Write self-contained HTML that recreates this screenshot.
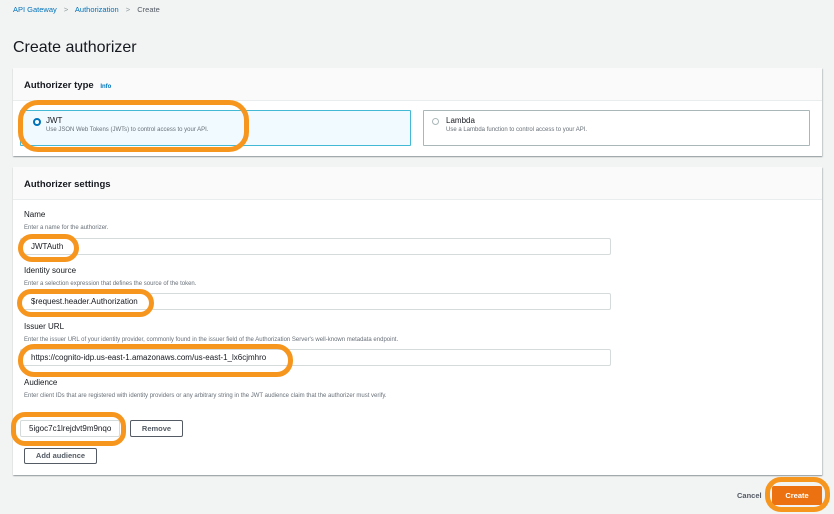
<!DOCTYPE html>
<html><head><meta charset="utf-8">
<style>
*{box-sizing:border-box;margin:0;padding:0}
body{width:834px;height:514px;background:#f2f3f3;font-family:"Liberation Sans",sans-serif;color:#16191f;position:relative;overflow:hidden}
.a{position:absolute;white-space:nowrap}
.panel{position:absolute;left:13px;width:809px;background:#fff;box-shadow:0 1px 1px rgba(0,28,36,.3),1px 1px 1px rgba(0,28,36,.15)}
.ph{position:absolute;left:0;top:0;width:100%;background:#fafafa;border-bottom:1px solid #eaeded}
.lbl{font-size:8px;color:#16191f}
.desc{font-size:6px;color:#687078}
.inp{position:absolute;background:#fff;border:1px solid #d5dbdb;border-radius:2px;font-size:8px;padding-left:10px;line-height:15px}
.btn{position:absolute;background:#fff;border:1px solid #545b64;border-radius:2px;font-size:7.5px;font-weight:bold;color:#545b64;text-align:center}
.ov{position:absolute;border:5px solid #f7961e;border-radius:16px}
</style></head><body>
<div class="a" style="left:13px;top:5px;font-size:7.5px;color:#0073bb">API Gateway <span style="color:#879596;margin:0 5px">&gt;</span> Authorization <span style="color:#879596;margin:0 5px">&gt;</span> <span style="color:#545b64">Create</span></div>
<div class="a" style="left:13px;top:39px;font-size:16px;color:#16191f">Create authorizer</div>

<div class="panel" style="top:68px;height:88px">
  <div class="ph" style="height:33px"></div>
  <div class="a" style="left:11px;top:12px;font-size:9.5px;font-weight:bold">Authorizer type <span style="font-size:6px;color:#0073bb;margin-left:4px">Info</span></div>
  <div style="position:absolute;left:7px;top:42px;width:391px;height:36px;background:#f1faff;border:1px solid #44b9d6;border-radius:1px"></div>
  <div style="position:absolute;left:410px;top:42px;width:387px;height:36px;background:#fff;border:1px solid #aab7b8;border-radius:1px"></div>
  <div style="position:absolute;left:20px;top:50px;width:8px;height:8px;border-radius:50%;border:2.5px solid #0073bb;background:#fff"></div>
  <div class="a" style="left:33px;top:48px;font-size:8px">JWT</div>
  <div class="a desc" style="left:33px;top:59px">Use JSON Web Tokens (JWTs) to control access to your API.</div>
  <div style="position:absolute;left:419px;top:50px;width:7px;height:7px;border-radius:50%;border:1px solid #aab7b8;background:#fff"></div>
  <div class="a" style="left:433px;top:48px;font-size:8px">Lambda</div>
  <div class="a desc" style="left:433px;top:59px">Use a Lambda function to control access to your API.</div>
</div>

<div class="panel" style="top:167px;height:308px">
  <div class="ph" style="height:33px"></div>
  <div class="a" style="left:11px;top:12px;font-size:9.5px;font-weight:bold">Authorizer settings</div>
</div>
<div class="a lbl" style="left:24px;top:210px">Name</div>
<div class="a desc" style="left:24px;top:225px">Enter a name for the authorizer.</div>
<div class="inp" style="left:20px;top:238px;width:591px;height:17px">JWTAuth</div>
<div class="a lbl" style="left:24px;top:266px">Identity source</div>
<div class="a desc" style="left:24px;top:281px">Enter a selection expression that defines the source of the token.</div>
<div class="inp" style="left:20px;top:293px;width:591px;height:17px">$request.header.Authorization</div>
<div class="a lbl" style="left:24px;top:322px">Issuer URL</div>
<div class="a desc" style="left:24px;top:337px">Enter the issuer URL of your identity provider, commonly found in the issuer field of the Authorization Server's well-known metadata endpoint.</div>
<div class="inp" style="left:20px;top:349px;width:591px;height:17px">https://cognito-idp.us-east-1.amazonaws.com/us-east-1_lx6cjmhro</div>
<div class="a lbl" style="left:24px;top:378px">Audience</div>
<div class="a desc" style="left:24px;top:393px">Enter client IDs that are registered with identity providers or any arbitrary string in the JWT audience claim that the authorizer must verify.</div>
<div class="inp" style="left:20px;top:420px;width:100px;height:17px;padding-left:8px;overflow:hidden">5igoc7c1lrejdvt9m9nqo</div>
<div class="btn" style="left:130px;top:420px;width:53px;height:17px;line-height:15px">Remove</div>
<div class="btn" style="left:24px;top:448px;width:73px;height:16px;line-height:14px">Add audience</div>

<div class="a" style="left:737px;top:491px;font-size:7.5px;font-weight:bold;color:#545b64">Cancel</div>
<div style="position:absolute;left:772px;top:486px;width:50px;height:19px;background:#ec7211;border-radius:2px;color:#fff;font-size:7.5px;font-weight:bold;text-align:center;line-height:19px">Create</div>

<div class="ov" style="left:18px;top:100px;width:231px;height:52px;border-radius:20px"></div>
<div class="ov" style="left:18px;top:234px;width:61px;height:28px;border-radius:14px"></div>
<div class="ov" style="left:17px;top:289px;width:137px;height:28px;border-radius:14px"></div>
<div class="ov" style="left:18px;top:344px;width:275px;height:33px;border-radius:16px"></div>
<div class="ov" style="left:11px;top:412px;width:115px;height:34px;border-radius:14px"></div>
<div class="ov" style="left:765px;top:477px;width:65px;height:35px;border-radius:16px"></div>
</body></html>
